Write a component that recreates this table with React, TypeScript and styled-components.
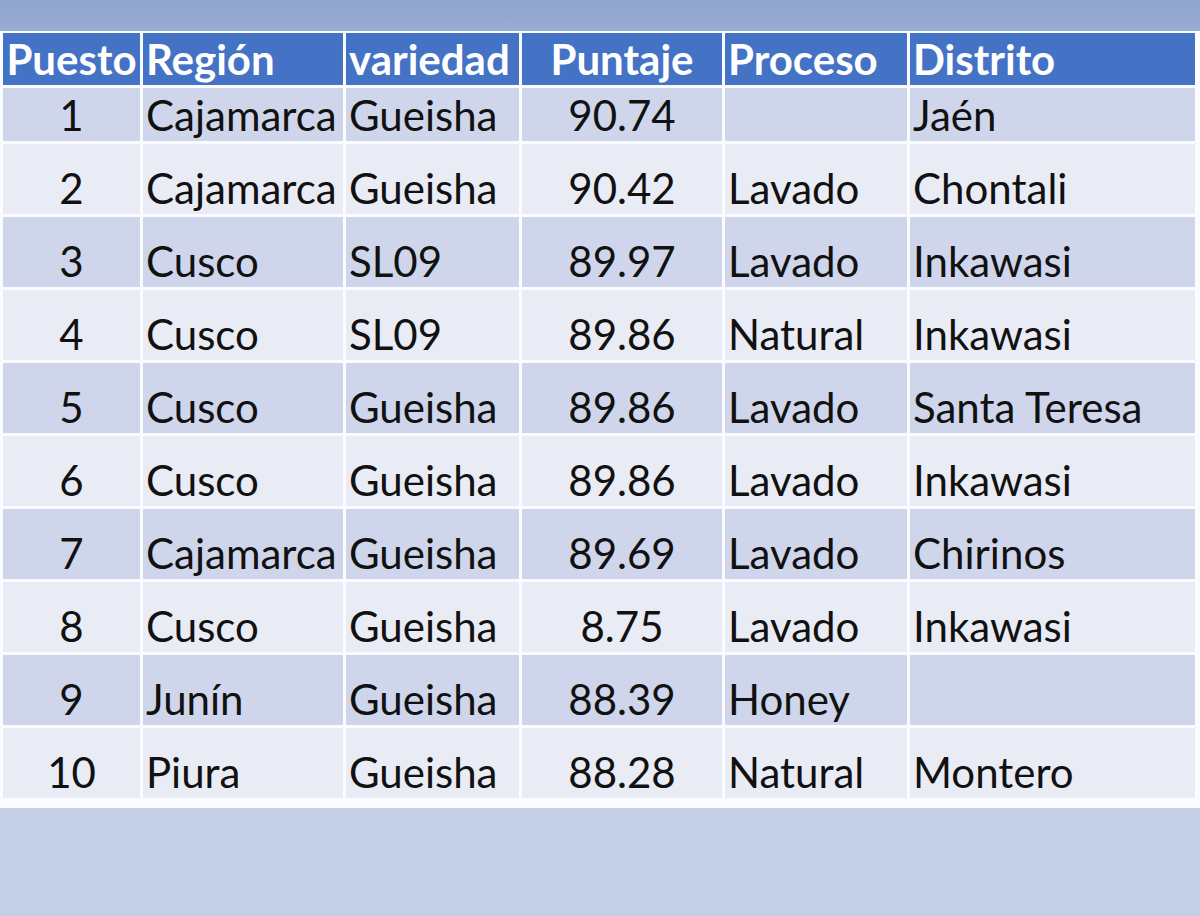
import React from 'react';
import styled, { createGlobalStyle } from 'styled-components';

const GlobalStyle = createGlobalStyle`
  html, body {
    margin: 0;
    padding: 0;
    background: #c4cee4;
  }
  body {
    font-family: Lato, 'Open Sans', sans-serif;
  }
`;

type Align = 'left' | 'center';

const columns: { title: string; key: string; align: Align }[] = [
  { title: 'Puesto', key: 'puesto', align: 'center' },
  { title: 'Región', key: 'region', align: 'left' },
  { title: 'variedad', key: 'variedad', align: 'left' },
  { title: 'Puntaje', key: 'puntaje', align: 'center' },
  { title: 'Proceso', key: 'proceso', align: 'left' },
  { title: 'Distrito', key: 'distrito', align: 'left' },
];

const rows = [
  { puesto: '1', region: 'Cajamarca', variedad: 'Gueisha', puntaje: '90.74', proceso: '', distrito: 'Jaén' },
  { puesto: '2', region: 'Cajamarca', variedad: 'Gueisha', puntaje: '90.42', proceso: 'Lavado', distrito: 'Chontali' },
  { puesto: '3', region: 'Cusco', variedad: 'SL09', puntaje: '89.97', proceso: 'Lavado', distrito: 'Inkawasi' },
  { puesto: '4', region: 'Cusco', variedad: 'SL09', puntaje: '89.86', proceso: 'Natural', distrito: 'Inkawasi' },
  { puesto: '5', region: 'Cusco', variedad: 'Gueisha', puntaje: '89.86', proceso: 'Lavado', distrito: 'Santa Teresa' },
  { puesto: '6', region: 'Cusco', variedad: 'Gueisha', puntaje: '89.86', proceso: 'Lavado', distrito: 'Inkawasi' },
  { puesto: '7', region: 'Cajamarca', variedad: 'Gueisha', puntaje: '89.69', proceso: 'Lavado', distrito: 'Chirinos' },
  { puesto: '8', region: 'Cusco', variedad: 'Gueisha', puntaje: '8.75', proceso: 'Lavado', distrito: 'Inkawasi' },
  { puesto: '9', region: 'Junín', variedad: 'Gueisha', puntaje: '88.39', proceso: 'Honey', distrito: '' },
  { puesto: '10', region: 'Piura', variedad: 'Gueisha', puntaje: '88.28', proceso: 'Natural', distrito: 'Montero' },
];

const App = () => {
  return (
    <Page>
      <GlobalStyle />
      <TopBand />
      <TableBox>
        {columns.map((col) => (
          <HeadCell key={col.key} align={col.align}>
            {col.title}
          </HeadCell>
        ))}
        {rows.map((row, i) =>
          columns.map((col) => (
            <Cell key={`${i}-${col.key}`} align={col.align} odd={i % 2 === 0}>
              {(row as Record<string, string>)[col.key]}
            </Cell>
          )),
        )}
      </TableBox>
      <BottomFill />
    </Page>
  );
};

const Page = styled.div`
  width: 1200px;
  height: 916px;
  display: flex;
  flex-direction: column;
  overflow: hidden;
`;

const TopBand = styled.div`
  height: 31px;
  background: linear-gradient(180deg, #8fa3cf 0%, #98acd5 100%);
`;

const TableBox = styled.div`
  display: grid;
  grid-template-columns: 137px 200px 173px 200px 182px 1fr;
  grid-template-rows: 52px 53px repeat(9, 70px);
  column-gap: 3px;
  row-gap: 3px;
  padding: 2px 5px 10px 3px;
  background: #fbfcff;
`;

const HeadCell = styled.div<{ align: Align }>`
  display: flex;
  align-items: center;
  justify-content: ${({ align }) => (align === 'center' ? 'center' : 'flex-start')};
  padding-left: ${({ align }) => (align === 'center' ? '0' : '3px')};
  background: #4472c4;
  color: #ffffff;
  font-size: 42px;
  font-weight: 700;
  white-space: nowrap;
  overflow: hidden;
`;

// body text sits at the bottom of its cell, as in a spreadsheet
const Cell = styled.div<{ align: Align; odd: boolean }>`
  display: flex;
  align-items: flex-end;
  justify-content: ${({ align }) => (align === 'center' ? 'center' : 'flex-start')};
  padding-left: ${({ align }) => (align === 'center' ? '0' : '3px')};
  padding-bottom: 5px;
  background: ${({ odd }) => (odd ? '#cfd5ea' : '#e9ebf5')};
  color: #111111;
  font-size: 42px;
  line-height: 1;
  font-weight: 400;
  white-space: nowrap;
  overflow: hidden;
`;

const BottomFill = styled.div`
  flex: 1;
  background: #c4cee4;
`;

export default App;
